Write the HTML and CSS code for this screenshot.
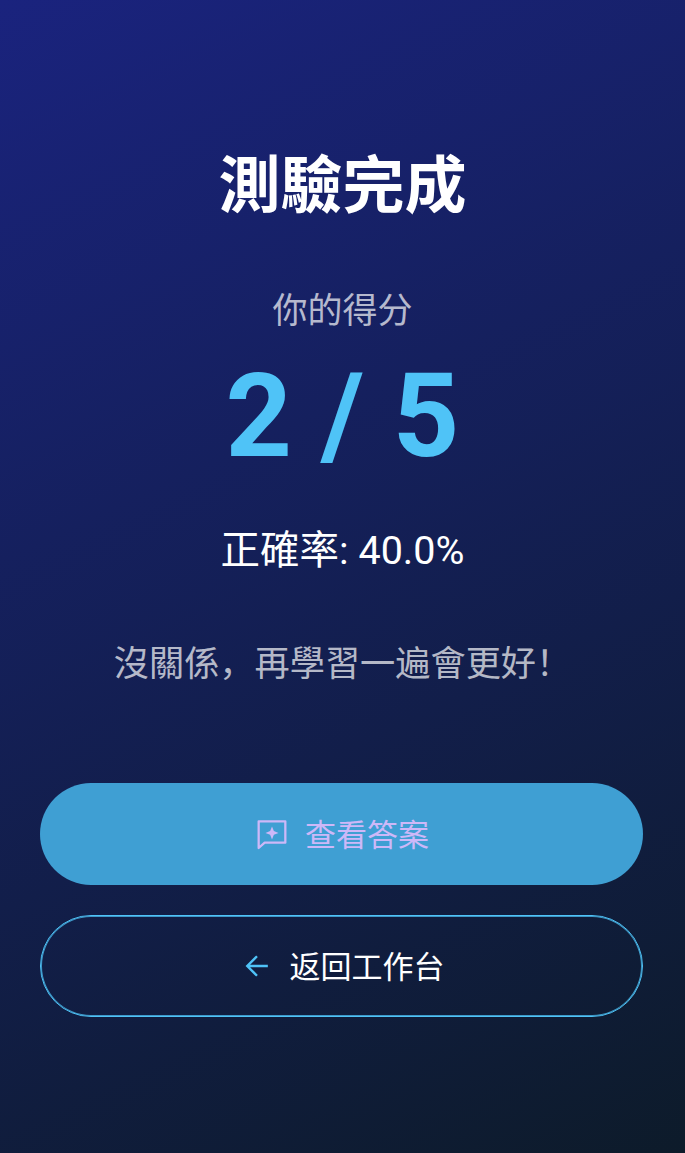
FILE: index.html
```html
<!DOCTYPE html>
<html>
<head>
<meta charset="utf-8">
<title>測驗完成</title>
<link rel="stylesheet" href="styles.css">
</head>
<body>
<main class="screen">
  <h1 class="title">測驗完成</h1>
  <p class="label">你的得分</p>
  <p class="score">2 / 5</p>
  <p class="rate">正確率: 40.0%</p>
  <p class="note">沒關係，再學習一遍會更好！</p>
  <div class="actions">
    <button class="btn btn-fill">
      <svg class="icon" viewBox="0 0 24 24" fill="none" stroke="currentColor" stroke-width="1.7" stroke-linejoin="round"><path d="M2 2.500h20v16H6.500L2 22.500z"/><path d="M12 6.300l1.400 3.500 3.500 1.400-3.500 1.400-1.400 3.500-1.400-3.500-3.500-1.400 3.500-1.400z" fill="currentColor" stroke="none"/></svg>
      <span class="btn-text">查看答案</span>
    </button>
    <button class="btn btn-line">
      <svg class="icon icon-back" viewBox="0 0 24 24" fill="none" stroke="currentColor" stroke-width="2.200"><path d="M22 12H3M12 3l-9 9 9 9"/></svg>
      <span class="btn-text">返回工作台</span>
    </button>
  </div>
</main>
</body>
</html>
```
FILE: styles.css
```css
* { box-sizing: border-box; }
html, body { margin: 0; height: 100%; }
body { font-family: Roboto, "Noto Sans CJK SC", sans-serif; }
.screen {
  min-height: 1153px;
  padding: 151px 40px 0;
  display: flex;
  flex-direction: column;
  align-items: center;
  background: linear-gradient(155deg, #1a237e 0%, #0d1b2a 100%);
  color: #fff;
}
.title { margin: 0; font-size: 62px; line-height: 72px; font-weight: 700; }
.label { margin: 68px 0 0; font-size: 35px; line-height: 42px; color: rgba(255,255,255,.7); }
.score { margin: 15px 0 0; font-size: 116px; line-height: 136px; font-weight: 700; color: #4fc3f7; }
.rate { margin: 42px 0 0; font-size: 39.5px; line-height: 50px; }
.note { margin: 63px 0 0; font-size: 35.2px; line-height: 50px; color: rgba(255,255,255,.7); }
.actions { margin-top: 94px; width: 100%; padding-right: 2px; display: flex; flex-direction: column; gap: 30px; }
.btn {
  height: 102px;
  width: 100%;
  border-radius: 51px;
  display: flex;
  align-items: center;
  justify-content: center;
  padding: 0;
  font: 400 31px Roboto, "Noto Sans CJK SC", sans-serif;
}
.btn-text { margin-bottom: 4px; }
.btn-fill { background: #3f9fd3; border: 0; padding-left: 2px; color: #cdb8f8; gap: 17px; }
.btn-line { background: transparent; border: 1px solid #4fc3f7; box-shadow: inset 0 0 0 1px rgba(79,195,247,.75); padding-left: 5px; color: #fff; gap: 20px; }
.icon { width: 32px; height: 32px; }
.icon-back { width: 26px; height: 26px; color: #4fc3f7; }
```
